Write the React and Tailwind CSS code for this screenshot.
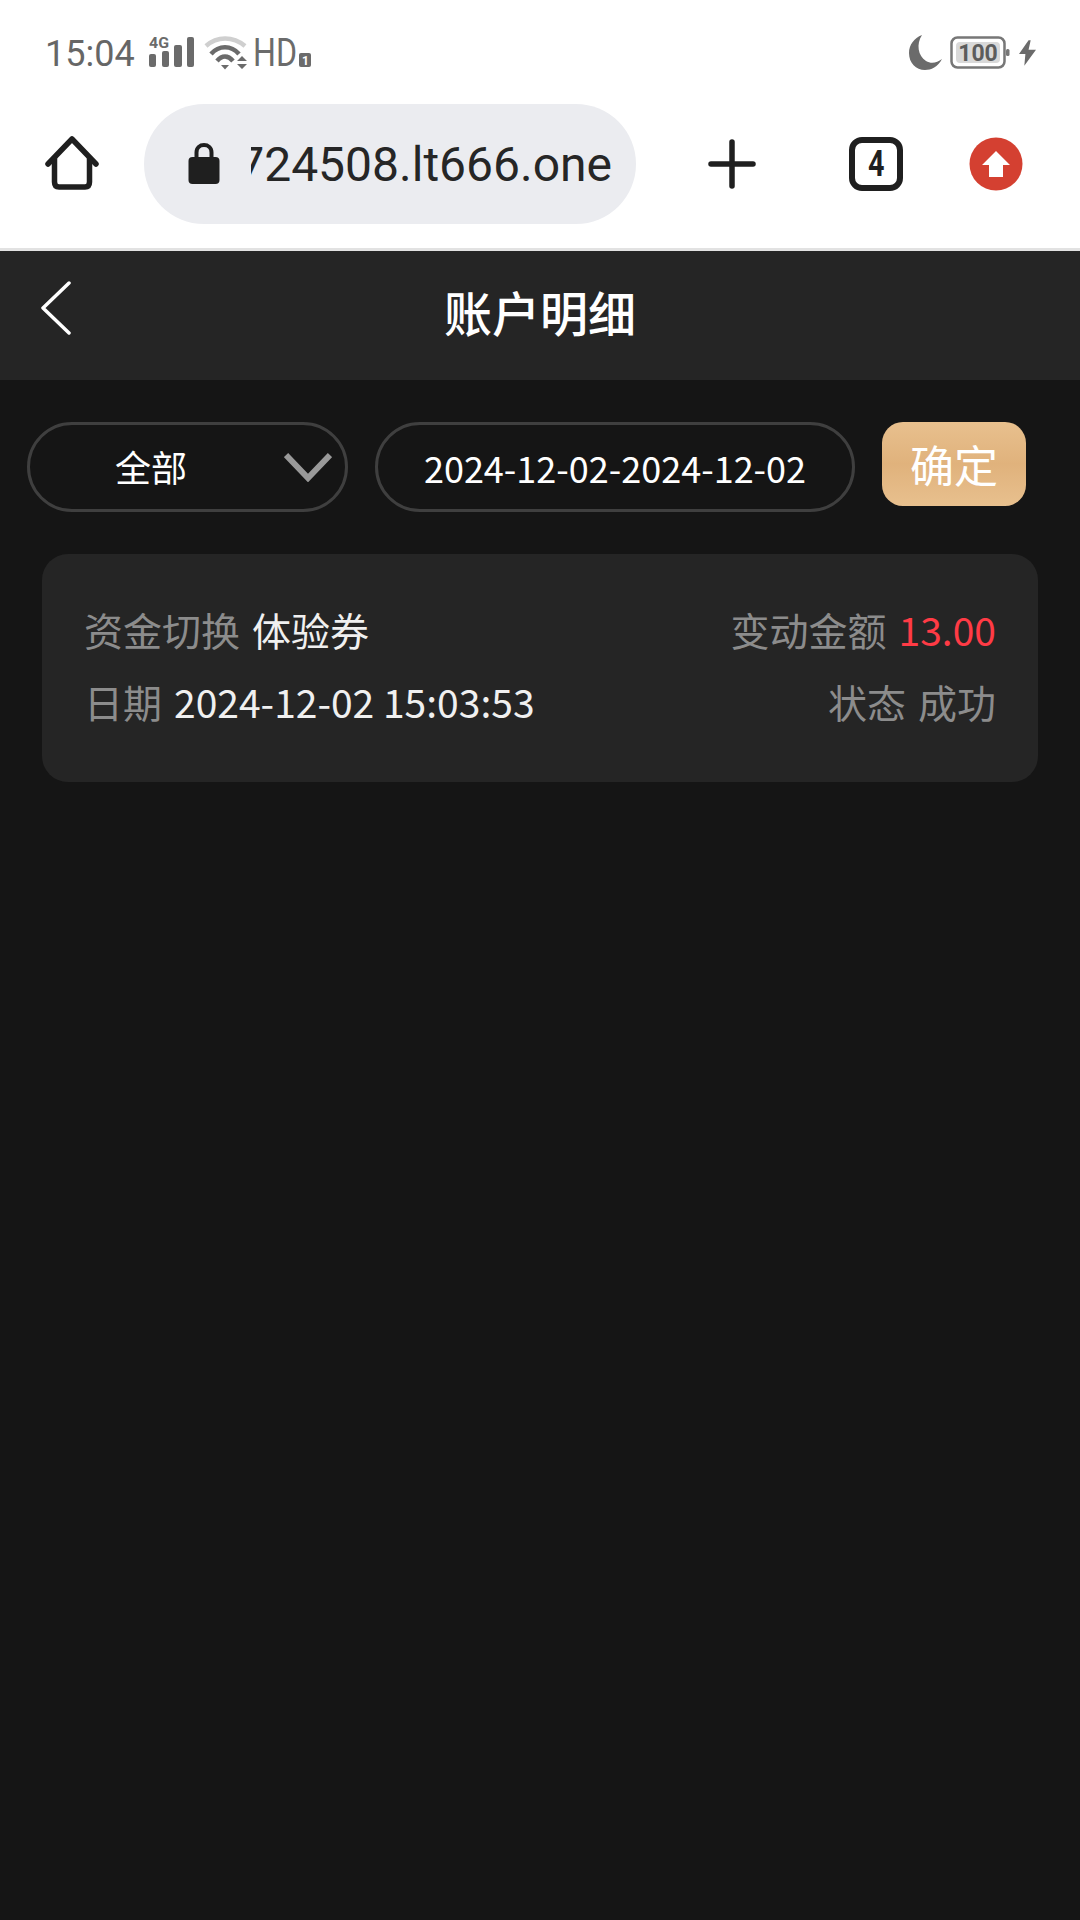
import React from "react";

const CJK = "font-['Noto_Sans_CJK_SC','Noto_Sans',sans-serif]";

// Status bar glyphs
function SignalIcon() {
  return (
    <svg width="46" height="34" viewBox="0 0 46 34" fill="#6b6b6b">
      <text x="0" y="13" fontSize="15" fontWeight="700" fontFamily="Roboto, sans-serif" textLength="20" lengthAdjust="spacingAndGlyphs">4G</text>
      <rect x="0" y="19" width="7" height="13" rx="2" />
      <rect x="13" y="16" width="7" height="16" rx="2" />
      <rect x="25" y="10" width="8" height="22" rx="2" />
      <rect x="38" y="2" width="7" height="30" rx="2" />
    </svg>
  );
}

function WifiIcon() {
  return (
    <svg width="46" height="36" viewBox="0 0 46 36" fill="none">
      <path d="M2 11 C13 1 29 1 41 11" stroke="#cfcfcf" strokeWidth="4.5" />
      <path d="M7 19 C15 10 27 10 35 19" stroke="#6b6b6b" strokeWidth="4.5" />
      <path d="M13 26 C18 20 24 20 29 26" stroke="#6b6b6b" strokeWidth="4.5" />
      <path d="M17 30 H25 L21 34.5 Z" fill="#6b6b6b" />
      <path d="M33 26 L38 21 L43 26 Z M33 29 H43 L38 34 Z" fill="#6b6b6b" />
    </svg>
  );
}

function HdIcon() {
  return (
    <svg width="60" height="36" viewBox="0 0 60 36">
      <text x="0" y="31" fontSize="38" fontFamily="Roboto, sans-serif" fill="#6b6b6b" textLength="44" lengthAdjust="spacingAndGlyphs">HD</text>
      <rect x="46" y="18" width="12" height="14" rx="2" fill="#6b6b6b" />
      <text x="49" y="30" fontSize="12" fontWeight="700" fontFamily="Roboto, sans-serif" fill="#fff">1</text>
    </svg>
  );
}

function MoonIcon() {
  return (
    <svg width="34" height="36" viewBox="0 0 34 36" fill="#6b6b6b">
      <path d="M13 0 C7 9 9 21 17 26 C22 29 28 28 33 24 C29 32 22 35 16 35 C7 35 0 28 0 18 C0 10 5 3 13 0 Z" />
    </svg>
  );
}

function BatteryIcon() {
  return (
    <svg width="60" height="34" viewBox="0 0 60 34">
      <rect x="1.5" y="1.5" width="53" height="30" rx="6" fill="none" stroke="#777" strokeWidth="2.5" />
      <rect x="6" y="6" width="44" height="21" rx="4" fill="#d9d9d9" />
      <rect x="56" y="13" width="3.5" height="7" rx="1.5" fill="#777" />
      <text x="28" y="24.5" fontSize="23" fontWeight="700" textAnchor="middle" fontFamily="Roboto, sans-serif" fill="#5c5c5c">100</text>
    </svg>
  );
}

function BoltIcon() {
  return (
    <svg width="17" height="26" viewBox="0 0 16 24" fill="#6b6b6b">
      <path d="M9 0 L0 13 H6 L5 24 L16 9 H9 L11 0 Z" />
    </svg>
  );
}

// Browser toolbar glyphs
function HomeIcon() {
  return (
    <svg width="54" height="56" viewBox="0 0 54 56" fill="none" stroke="#1f1f1f" strokeWidth="5.5" strokeLinecap="round" strokeLinejoin="round">
      <path d="M3 29 L27 4 L51 29" />
      <path d="M9.5 24 V47 Q9.5 52 14 52 H40 Q44.5 52 44.5 47 V24" />
    </svg>
  );
}

function LockIcon() {
  return (
    <svg width="32" height="42" viewBox="0 0 32 42" fill="#1f1f1f">
      <path d="M8.5 16 V10.5 C8.5 5.5 12 3 16 3 C20 3 23.5 5.5 23.5 10.5 V16" fill="none" stroke="#1f1f1f" strokeWidth="4" />
      <rect x="0.5" y="15" width="31" height="27" rx="4" />
    </svg>
  );
}

function PlusIcon() {
  return (
    <svg width="48" height="50" viewBox="0 0 48 50" fill="none" stroke="#1f1f1f" strokeWidth="5.5" strokeLinecap="round">
      <path d="M24 3 V47" />
      <path d="M3 25 H45" />
    </svg>
  );
}

function UploadBadge() {
  return (
    <svg width="54" height="54" viewBox="0 0 54 54">
      <circle cx="27" cy="27" r="26.5" fill="#d44031" />
      <path d="M27 14 L41 28 H34 V40 H20 V28 H13 Z" fill="#fff" />
    </svg>
  );
}

function TabCount() {
  return (
    <div className="w-[54px] h-[54px] rounded-[13px] border-[6px] border-[#1f1f1f] flex items-center justify-center">
      <span className="font-['Roboto',sans-serif] font-bold text-[36px] leading-none text-[#1f1f1f] scale-x-[0.8]">4</span>
    </div>
  );
}

export default function App() {
  return (
    <div className="w-[1080px] h-[1920px] flex flex-col bg-[#151515] overflow-hidden">
      {/* System status bar */}
      <div className="h-[104px] bg-white shrink-0 flex items-start justify-between pt-[34px] pl-[45px] pr-[44px]">
        <div className="flex items-center h-[38px]">
          <span className="font-['Roboto',sans-serif] text-[36px] leading-none text-[#666666] w-[104px] pt-[2px]">15:04</span>
          <div className="w-[55px] -mt-[2px]"><SignalIcon /></div>
          <div className="w-[49px]"><WifiIcon /></div>
          <HdIcon />
        </div>
        <div className="flex items-center h-[38px] gap-[7px]">
          <div className="-ml-[3px]"><MoonIcon /></div>
          <BatteryIcon />
          <div className="ml-[2px]"><BoltIcon /></div>
        </div>
      </div>

      {/* Browser toolbar */}
      <div className="h-[144px] bg-white shrink-0 flex items-start pl-[45px]">
        <div className="w-[99px] pt-[31px]"><HomeIcon /></div>
        <div className="w-[492px] h-[120px] rounded-[60px] bg-[#ebecf0] flex items-center pl-[44px] pr-[24px]">
          <div className="shrink-0 -mt-[2px]"><LockIcon /></div>
          <div className="ml-[31px] flex-1 overflow-hidden flex justify-end pt-[2px]">
            <span className="font-['Roboto',sans-serif] text-[48px] leading-none text-[#262626] whitespace-nowrap">724508.lt666.one</span>
          </div>
        </div>
        <div className="ml-[72px] pt-[35px]"><PlusIcon /></div>
        <div className="ml-[93px] pt-[33px]"><TabCount /></div>
        <div className="ml-[66px] pt-[33px]"><UploadBadge /></div>
      </div>
      <div className="h-[3px] bg-[#e2e2e2] shrink-0" />

      {/* Page header */}
      <div className="h-[129px] bg-[#252525] shrink-0 grid grid-cols-[1fr_auto_1fr] items-start">
        <div className="pl-[40px] pt-[30px]">
          <svg width="32" height="54" viewBox="0 0 32 54" fill="none" stroke="#fff" strokeWidth="3.5" strokeLinecap="round" strokeLinejoin="round">
            <path d="M29 2 L3 27 L29 52" />
          </svg>
        </div>
        <div className={`${CJK} text-[48px] leading-none font-medium text-white pt-[36px]`}>账户明细</div>
        <div />
      </div>

      {/* Filter row */}
      <div className={`${CJK} flex items-start pt-[42px] pl-[27px]`}>
        <div className="w-[321px] h-[90px] rounded-[45px] border-[3px] border-[#3f3f3f] flex items-center pl-[85px] pr-[13px] justify-between">
          <span className="text-[36px] leading-none text-white -mt-[2px]">全部</span>
          <svg width="48" height="30" viewBox="0 0 48 30" fill="none" stroke="#999" strokeWidth="6">
            <path d="M2 3 L24 26 L46 3" />
          </svg>
        </div>
        <div className="ml-[27px] w-[480px] h-[90px] rounded-[45px] border-[3px] border-[#3f3f3f] flex items-center justify-center">
          <span className="text-[36px] leading-none text-white whitespace-nowrap -mt-[1px]">2024-12-02-2024-12-02</span>
        </div>
        <div className="ml-[27px] w-[144px] h-[84px] rounded-[21px] bg-gradient-to-b from-[#e8c08e] via-[#e0b27c] to-[#e8c08e] flex items-center justify-center">
          <span className="text-[44px] leading-none text-white -mt-[1px]">确定</span>
        </div>
      </div>

      {/* Transaction card */}
      <div className={`${CJK} ml-[42px] mt-[42px] w-[996px] h-[228px] rounded-[26px] bg-[#252525] px-[42px] pt-[39px] text-[39px] leading-[72px]`}>
        <div className="flex justify-between h-[72px]">
          <div className="flex gap-[12px]">
            <span className="text-[#8c8c8c]">资金切换</span>
            <span className="text-[#f0f0f0]">体验券</span>
          </div>
          <div className="flex gap-[12px]">
            <span className="text-[#8c8c8c]">变动金额</span>
            <span className="text-[#ff3b45]">13.00</span>
          </div>
        </div>
        <div className="flex justify-between h-[72px]">
          <div className="flex gap-[12px]">
            <span className="text-[#8c8c8c]">日期</span>
            <span className="text-[#f0f0f0]">2024-12-02 15:03:53</span>
          </div>
          <div className="flex gap-[12px]">
            <span className="text-[#8c8c8c]">状态</span>
            <span className="text-[#8c8c8c]">成功</span>
          </div>
        </div>
      </div>
    </div>
  );
}
